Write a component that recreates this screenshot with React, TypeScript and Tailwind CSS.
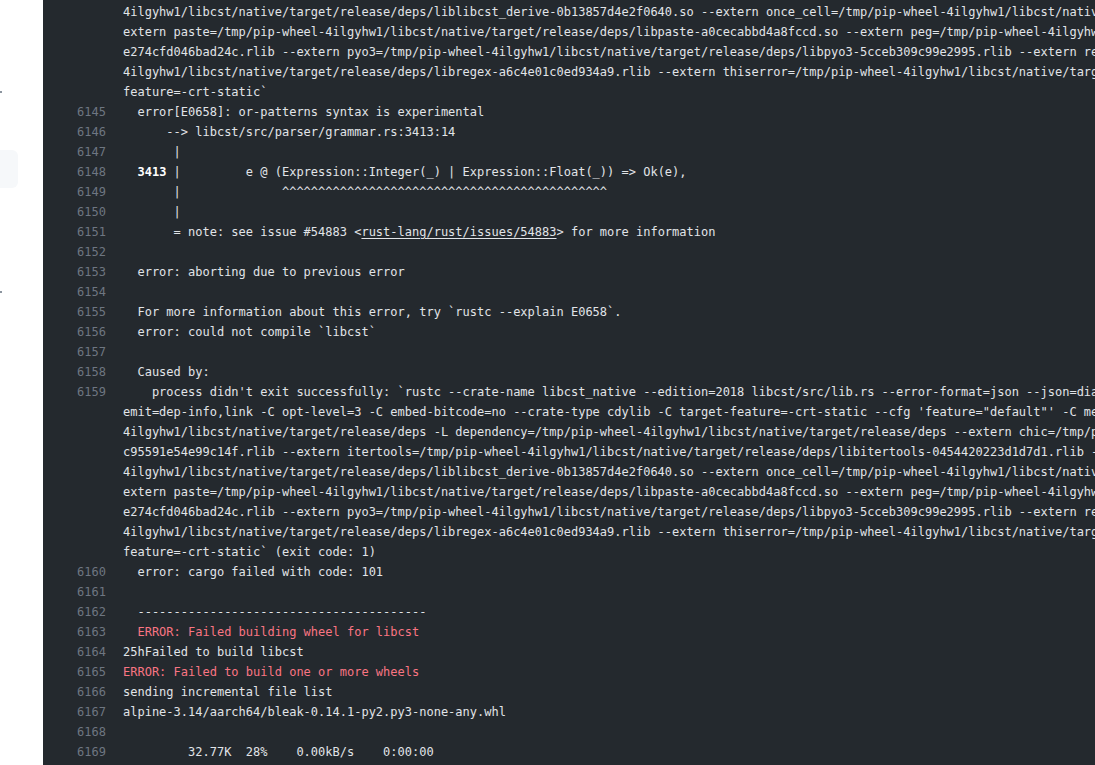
const lines: { n?: number; text?: string; kind?: "red" | "note" | "bold3413" }[] = [
  { text: "4ilgyhw1/libcst/native/target/release/deps/liblibcst_derive-0b13857d4e2f0640.so --extern once_cell=/tmp/pip-wheel-4ilgyhw1/libcst/native/target/release/deps/libonce_cell" },
  { text: "extern paste=/tmp/pip-wheel-4ilgyhw1/libcst/native/target/release/deps/libpaste-a0cecabbd4a8fccd.so --extern peg=/tmp/pip-wheel-4ilgyhw1/libcst/native/target" },
  { text: "e274cfd046bad24c.rlib --extern pyo3=/tmp/pip-wheel-4ilgyhw1/libcst/native/target/release/deps/libpyo3-5cceb309c99e2995.rlib --extern regex=/tmp/pip-wheel" },
  { text: "4ilgyhw1/libcst/native/target/release/deps/libregex-a6c4e01c0ed934a9.rlib --extern thiserror=/tmp/pip-wheel-4ilgyhw1/libcst/native/target/release/deps" },
  { text: "feature=-crt-static`" },
  { n: 6145, text: "  error[E0658]: or-patterns syntax is experimental" },
  { n: 6146, text: "      --> libcst/src/parser/grammar.rs:3413:14" },
  { n: 6147, text: "       |" },
  { n: 6148, kind: "bold3413" },
  { n: 6149, text: "       |              " + "^".repeat(45) },
  { n: 6150, text: "       |" },
  { n: 6151, kind: "note" },
  { n: 6152, text: "" },
  { n: 6153, text: "  error: aborting due to previous error" },
  { n: 6154, text: "" },
  { n: 6155, text: "  For more information about this error, try `rustc --explain E0658`." },
  { n: 6156, text: "  error: could not compile `libcst`" },
  { n: 6157, text: "" },
  { n: 6158, text: "  Caused by:" },
  { n: 6159, text: "    process didn't exit successfully: `rustc --crate-name libcst_native --edition=2018 libcst/src/lib.rs --error-format=json --json=diagnostic-rendered-ansi" },
  { text: "emit=dep-info,link -C opt-level=3 -C embed-bitcode=no --crate-type cdylib -C target-feature=-crt-static --cfg 'feature=\"default\"' -C metadata=7a1c" },
  { text: "4ilgyhw1/libcst/native/target/release/deps -L dependency=/tmp/pip-wheel-4ilgyhw1/libcst/native/target/release/deps --extern chic=/tmp/pip-wheel" },
  { text: "c95591e54e99c14f.rlib --extern itertools=/tmp/pip-wheel-4ilgyhw1/libcst/native/target/release/deps/libitertools-0454420223d1d7d1.rlib --extern" },
  { text: "4ilgyhw1/libcst/native/target/release/deps/liblibcst_derive-0b13857d4e2f0640.so --extern once_cell=/tmp/pip-wheel-4ilgyhw1/libcst/native/target/release/deps/libonce_cell" },
  { text: "extern paste=/tmp/pip-wheel-4ilgyhw1/libcst/native/target/release/deps/libpaste-a0cecabbd4a8fccd.so --extern peg=/tmp/pip-wheel-4ilgyhw1/libcst/native/target" },
  { text: "e274cfd046bad24c.rlib --extern pyo3=/tmp/pip-wheel-4ilgyhw1/libcst/native/target/release/deps/libpyo3-5cceb309c99e2995.rlib --extern regex=/tmp/pip-wheel" },
  { text: "4ilgyhw1/libcst/native/target/release/deps/libregex-a6c4e01c0ed934a9.rlib --extern thiserror=/tmp/pip-wheel-4ilgyhw1/libcst/native/target/release/deps" },
  { text: "feature=-crt-static` (exit code: 1)" },
  { n: 6160, text: "  error: cargo failed with code: 101" },
  { n: 6161, text: "" },
  { n: 6162, text: "  " + "-".repeat(40) },
  { n: 6163, text: "  ERROR: Failed building wheel for libcst", kind: "red" },
  { n: 6164, text: "25hFailed to build libcst" },
  { n: 6165, text: "ERROR: Failed to build one or more wheels", kind: "red" },
  { n: 6166, text: "sending incremental file list" },
  { n: 6167, text: "alpine-3.14/aarch64/bleak-0.14.1-py2.py3-none-any.whl" },
  { n: 6168, text: "" },
  { n: 6169, text: "         32.77K  28%    0.00kB/s    0:00:00" },
];

function LineBody({ line }: { line: (typeof lines)[number] }) {
  if (line.kind === "bold3413") {
    return (
      <>
        {"  "}
        <span className="font-semibold text-white">3413</span>
        {" |         e @ (Expression::Integer(_) | Expression::Float(_)) => Ok(e),"}
      </>
    );
  }
  if (line.kind === "note") {
    return (
      <>
        {"       = note: see issue #54883 <"}
        <span className="underline underline-offset-2">rust-lang/rust/issues/54883</span>
        {"> for more information"}
      </>
    );
  }
  return <>{line.text}</>;
}

export default function App() {
  return (
    <div className="flex h-[765px] w-[1095px] overflow-hidden bg-white">
      <aside className="flex w-[43px] shrink-0 flex-col bg-white">
        <div className="mt-[91px] h-[2px] w-[2px] bg-[#8c959f]" />
        <div className="mt-[57px] h-[38px] w-[18px] rounded-r-md bg-[#f6f8fa]" />
        <div className="mt-[103px] h-[2px] w-[2px] bg-[#8c959f]" />
      </aside>
      <main className="min-w-0 flex-1 overflow-hidden bg-[#24292e] pt-[2px] font-['DejaVu_Sans_Mono',monospace] text-[12px] leading-[20px] text-[#e1e4e8]">
        {lines.map((line, i) => (
          <div key={i} className="flex h-5 whitespace-pre">
            <span className="w-[63px] shrink-0 text-right text-[#6e7681]">{line.n ?? ""}</span>
            <span className={"pl-[17px] " + (line.kind === "red" ? "text-[#f97583]" : "")}>
              <LineBody line={line} />
            </span>
          </div>
        ))}
      </main>
    </div>
  );
}
